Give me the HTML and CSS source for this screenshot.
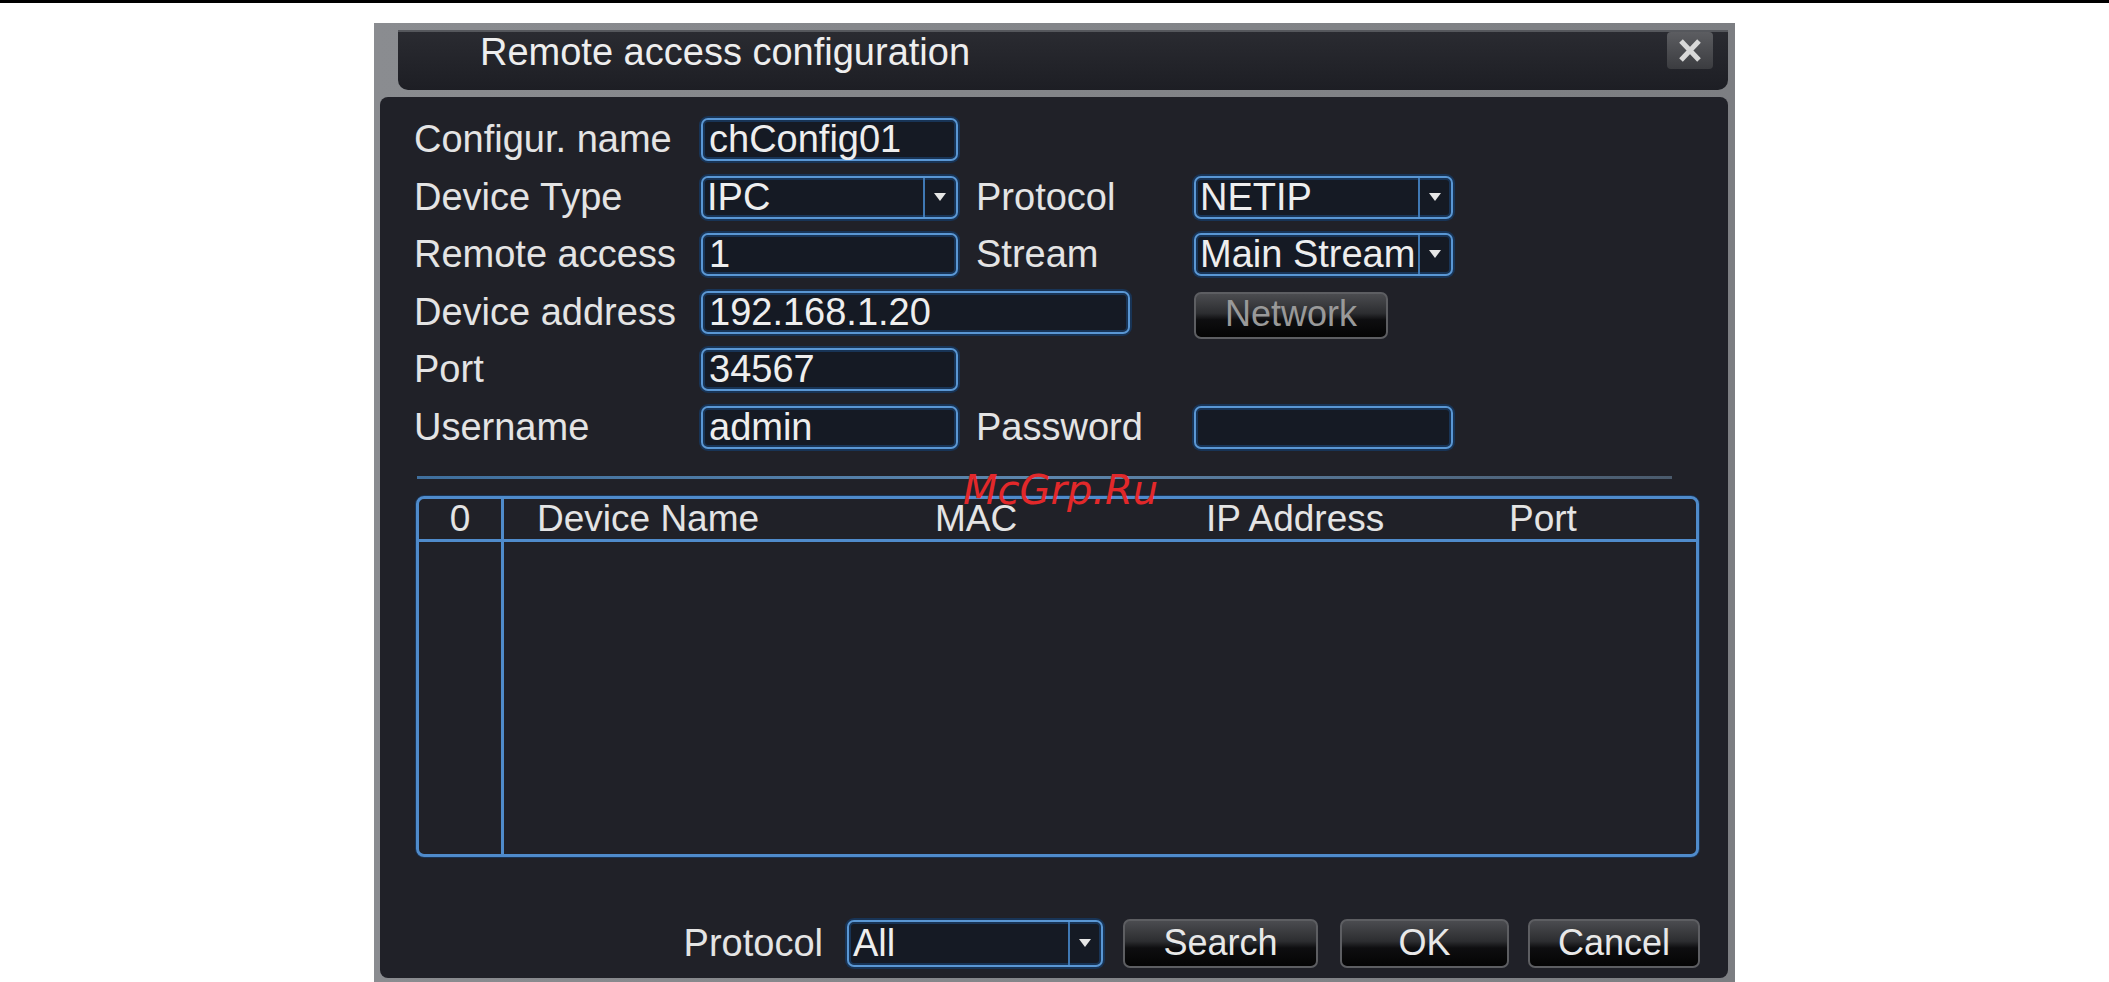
FILE: index.html
```html
<!DOCTYPE html>
<html>
<head>
<meta name="viewport" content="width=device-width, initial-scale=1">
<link rel="stylesheet" href="styles.css">
</head>
<body>
<div class="topline"></div>

<div class="dialog">
  <div class="titlebar">
    <span class="title">Remote access configuration</span>
    <div class="close">
      <svg width="46" height="37" viewBox="0 0 46 37">
        <path d="M14 9 L32 28 M32 9 L14 28" stroke="#d8d8d8" stroke-width="5"/>
      </svg>
    </div>
  </div>

  <div class="panel">
    <div class="form">
      <div class="label">Configur. name</div>
      <div class="field">chConfig01</div>
      <div></div>
      <div></div>

      <div class="label">Device Type</div>
      <div class="field select"><span class="value">IPC</span><span class="arrow"></span></div>
      <div class="label label2">Protocol</div>
      <div class="field select"><span class="value">NETIP</span><span class="arrow"></span></div>

      <div class="label">Remote access</div>
      <div class="field">1</div>
      <div class="label label2">Stream</div>
      <div class="field select"><span class="value">Main Stream</span><span class="arrow"></span></div>

      <div class="label">Device address</div>
      <div class="field wide">192.168.1.20</div>
      <div class="btn network">Network</div>

      <div class="label">Port</div>
      <div class="field">34567</div>
      <div></div>
      <div></div>

      <div class="label">Username</div>
      <div class="field">admin</div>
      <div class="label label2">Password</div>
      <div class="field"></div>
    </div>

    <div class="separator"></div>

    <div class="list">
      <div class="list-head">
        <div class="col-num">0</div>
        <div class="col">Device Name</div>
        <div class="col">MAC</div>
        <div class="col">IP Address</div>
        <div class="col">Port</div>
      </div>
      <div class="list-body">
        <div class="col-num"></div>
        <div></div>
      </div>
    </div>

    <div class="watermark">McGrp.Ru</div>

    <div class="actions">
      <span class="label">Protocol</span>
      <div class="field select proto"><span class="value">All</span><span class="arrow"></span></div>
      <div class="btn search">Search</div>
      <div class="btn ok">OK</div>
      <div class="btn cancel">Cancel</div>
    </div>
  </div>
</div>
</body>
</html>
```

FILE: styles.css
```css
body {
  margin: 0;
  background: #ffffff;
  font-family: "Liberation Sans", Arial, sans-serif;
  color: #e4e4e4;
  overflow: hidden;
}

.topline {
  height: 3px;
  background: #000;
}

.dialog {
  margin: 20px 0 0 374px;
  width: 1361px;
  height: 959px;
  box-sizing: border-box;
  padding: 7px 7px 4px 6px;
  background: linear-gradient(90deg, #8a8c90, #7c7e82);
  display: flex;
  flex-direction: column;
}

.titlebar {
  height: 60px;
  margin: 0 0 7px 18px;
  box-sizing: border-box;
  border-top: 2px solid #55575c;
  border-radius: 0 0 10px 10px;
  background: linear-gradient(#2a2b31, #1d1e24);
  display: flex;
}

.title {
  font-size: 38px;
  line-height: 40px;
  padding-left: 82px;
  color: #eeeeee;
}

.close {
  margin: 0 15px 0 auto;
  width: 46px;
  height: 37px;
  border-radius: 4px;
  background: linear-gradient(#5c5d61, #3b3c40);
}

.close svg {
  display: block;
}

.panel {
  flex: 1;
  position: relative;
  background: #202128;
  border-radius: 8px;
  display: flex;
  flex-direction: column;
}

.form {
  display: grid;
  grid-template-columns: 287px 257px 236px 259px;
  grid-auto-rows: 43px;
  row-gap: 14.5px;
  padding: 21px 0 0 34px;
}

.label {
  font-size: 38px;
  line-height: 43px;
  white-space: nowrap;
}

.label2 {
  padding-left: 18px;
}

.field {
  height: 43px;
  box-sizing: border-box;
  border: 2px solid #5a97d4;
  border-radius: 7px;
  background: #151a24;
  box-shadow: 0 0 0 2px #183456, inset 0 0 0 2px #183456;
  padding-left: 6px;
  font-size: 38px;
  line-height: 39px;
  color: #eeeeee;
  white-space: nowrap;
}

.wide {
  grid-column: 2 / 4;
  width: 429px;
}

.select {
  display: flex;
  padding-left: 4px;
}

.select .value {
  flex: 1;
}

.arrow {
  width: 31px;
  border-left: 2px solid #3f78b3;
  position: relative;
}

.arrow::after {
  content: "";
  position: absolute;
  left: 9px;
  top: 15px;
  border-top: 8px solid #e6e6e6;
  border-left: 6px solid transparent;
  border-right: 6px solid transparent;
}

.btn {
  box-sizing: border-box;
  border: 2px solid #5d5e62;
  border-radius: 7px;
  background: linear-gradient(#4b4c50 0%, #2c2d30 45%, #0e0e10 60%, #040404 100%);
  font-size: 36px;
  text-align: center;
  color: #e8e8e8;
}

.network {
  width: 194px;
  height: 47px;
  line-height: 40px;
  color: #999999;
  margin-top: 1px;
}

.separator {
  margin: 27px 0 0 37px;
  width: 1255px;
  height: 3px;
  background: linear-gradient(90deg, #3f6f9d, #5d86ad 50%, #4a5a6c);
}

.list {
  margin: 17px 0 0 36px;
  width: 1283px;
  height: 361px;
  box-sizing: border-box;
  border: 3px solid #4f8bcb;
  border-radius: 8px;
  box-shadow: 0 0 0 1px #183456;
  display: flex;
  flex-direction: column;
}

.list-head {
  display: grid;
  grid-template-columns: 85px 398px 271px 303px 1fr;
  height: 40px;
  border-bottom: 3px solid #4f8bcb;
  font-size: 37px;
  line-height: 40px;
}

.list-head .col {
  padding-left: 33px;
  white-space: nowrap;
}

.col-num {
  border-right: 3px solid #4f8bcb;
  text-align: center;
}

.list-body {
  flex: 1;
  display: grid;
  grid-template-columns: 85px 1fr;
}

.watermark {
  position: absolute;
  left: 583px;
  top: 370px;
  font-family: "DejaVu Sans", sans-serif;
  font-style: italic;
  font-size: 40px;
  color: #e2282a;
}

.actions {
  margin-top: auto;
  display: flex;
  align-items: center;
  justify-content: flex-end;
  padding: 0 28px 10px 0;
}

.actions .label {
  margin-right: 24px;
}

.proto {
  width: 256px;
  height: 47px;
  margin-right: 20px;
  line-height: 43px;
}

.proto .arrow::after {
  top: 17px;
}

.actions .btn {
  height: 49px;
  line-height: 44px;
}

.search {
  width: 195px;
  margin-right: 22px;
}

.ok {
  width: 169px;
  margin-right: 19px;
}

.cancel {
  width: 172px;
}
```
